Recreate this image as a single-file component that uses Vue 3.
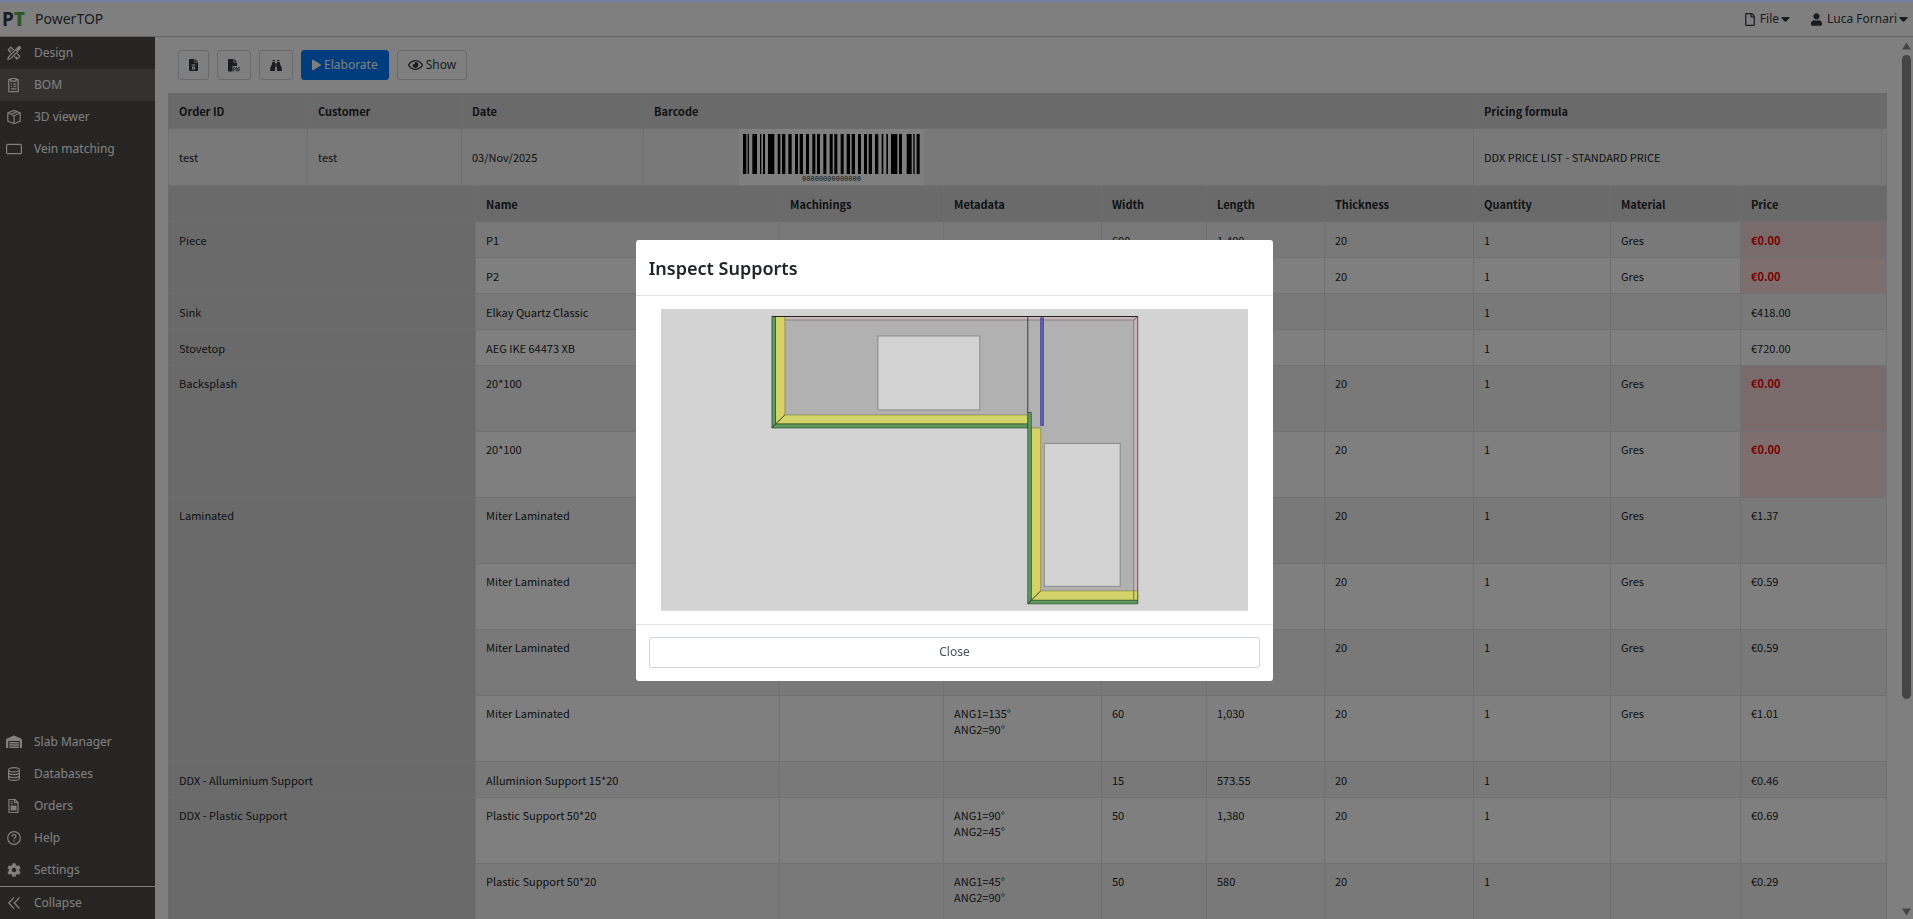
<script setup>
const topNav = [
  { label: 'Design', icon: 'design' },
  { label: 'BOM', icon: 'bom', active: true },
  { label: '3D viewer', icon: 'cube' },
  { label: 'Vein matching', icon: 'vein' },
]
const bottomNav = [
  { label: 'Slab Manager', icon: 'warehouse' },
  { label: 'Databases', icon: 'database' },
  { label: 'Orders', icon: 'orders' },
  { label: 'Help', icon: 'help' },
  { label: 'Settings', icon: 'settings' },
]

const share = (list) => {
  const total = list.reduce((a, b) => a + b, 0)
  return list.map((w) => ({ width: (100 * w) / total + '%' }))
}
const orderCols = share([139, 154, 182, 830, 408, 6])
const partCols = share([307, 304, 164, 158, 105, 118, 149, 137, 130, 147])

const headings = ['Name', 'Machinings', 'Metadata', 'Width', 'Length', 'Thickness', 'Quantity', 'Material', 'Price']

const groups = [
  {
    name: 'Piece',
    rows: [
      { name: 'P1', width: '600', length: '1,400', thick: '20', material: 'Gres', price: '€0.00', alert: true },
      { name: 'P2', width: '600', length: '1,600', thick: '20', material: 'Gres', price: '€0.00', alert: true },
    ],
  },
  { name: 'Sink', rows: [{ name: 'Elkay Quartz Classic', price: '€418.00' }] },
  { name: 'Stovetop', rows: [{ name: 'AEG IKE 64473 XB', price: '€720.00' }] },
  {
    name: 'Backsplash',
    rows: [
      { name: '20*100', tall: true, thick: '20', material: 'Gres', price: '€0.00', alert: true },
      { name: '20*100', tall: true, thick: '20', material: 'Gres', price: '€0.00', alert: true },
    ],
  },
  {
    name: 'Laminated',
    rows: [
      { name: 'Miter Laminated', tall: true, thick: '20', material: 'Gres', price: '€1.37' },
      { name: 'Miter Laminated', tall: true, thick: '20', material: 'Gres', price: '€0.59' },
      { name: 'Miter Laminated', tall: true, thick: '20', material: 'Gres', price: '€0.59' },
      { name: 'Miter Laminated', tall: true, meta: ['ANG1=135°', 'ANG2=90°'], width: '60', length: '1,030', thick: '20', material: 'Gres', price: '€1.01' },
    ],
  },
  {
    name: 'DDX - Alluminium Support',
    rows: [{ name: 'Alluminion Support 15*20', width: '15', length: '573.55', thick: '20', price: '€0.46' }],
  },
  {
    name: 'DDX - Plastic Support',
    rows: [
      { name: 'Plastic Support 50*20', tall: true, meta: ['ANG1=90°', 'ANG2=45°'], width: '50', length: '1,380', thick: '20', price: '€0.69' },
      { name: 'Plastic Support 50*20', tall: true, meta: ['ANG1=45°', 'ANG2=90°'], width: '50', length: '580', thick: '20', price: '€0.29' },
    ],
  },
]
const rows = groups.flatMap((g) =>
  g.rows.map((r, i) => ({ ...r, group: i === 0 ? g.name : null, span: g.rows.length }))
)

const bars = [
  [12, 10], [26, 4], [40, 14], [63, 4], [72, 6], [87, 19], [116, 8], [129, 10], [148, 10], [168, 9],
  [182, 10], [201, 9], [220, 9], [234, 9], [253, 9], [272, 9], [286, 9], [305, 9], [323, 10], [338, 10],
  [357, 9], [375, 9], [389, 10], [408, 10], [428, 5], [442, 5], [456, 19], [480, 9], [503, 15], [523, 4], [533, 9],
]
</script>

<template>
  <div class="app">
    <header class="topbar">
      <div class="brand">
        <span class="logo" aria-hidden="true">P<b>T</b></span>
        <span class="brand-name">PowerTOP</span>
      </div>
      <nav class="menus">
        <button type="button" class="menu">
          <svg class="file-icon" viewBox="0 0 384 512"><path d="M369.9 97.9L286 14C277 5 264.8 0 252.1 0H48C21.5 0 0 21.5 0 48v416c0 26.5 21.5 48 48 48h288c26.5 0 48-21.5 48-48V131.9c0-12.7-5.1-25-14.1-34zM332.1 128H256V51.9l76.1 76.1zM48 464V48h160v104c0 13.3 10.7 24 24 24h104v288H48z" /></svg>
          <span>File</span>
          <svg class="caret" viewBox="0 0 9 5"><path d="M1 0h7q1 0 .6 1L5.200 4.600q-.7.600-1.400 0L.4 1Q0 0 1 0z" /></svg>
        </button>
        <button type="button" class="menu">
          <svg class="user-icon" viewBox="0 0 448 512"><path d="M224 256c70.700 0 128-57.300 128-128S294.700 0 224 0 96 57.300 96 128s57.300 128 128 128zm89.600 32h-16.700c-22.200 10.200-46.900 16-72.900 16s-50.600-5.800-72.900-16h-16.700C60.200 288 0 348.200 0 422.400V464c0 26.500 21.500 48 48 48h352c26.500 0 48-21.500 48-48v-41.600c0-74.200-60.200-134.400-134.400-134.400z" /></svg>
          <span>Luca Fornari</span>
          <svg class="caret" viewBox="0 0 9 5"><path d="M1 0h7q1 0 .6 1L5.200 4.600q-.7.600-1.400 0L.4 1Q0 0 1 0z" /></svg>
        </button>
      </nav>
    </header>

    <div class="body">
      <aside class="sidebar">
        <nav v-for="(list, n) in [topNav, bottomNav]" :key="n" class="nav">
          <a v-for="item in list" :key="item.label" href="#" class="nav-item" :class="{ active: item.active }">
            <svg class="nav-icon" viewBox="0 0 16 16">
              <g v-if="item.icon === 'design'" class="line">
                <path d="M2 5 4.800 2.200 7.500 5M11 8.500l2.800 2.800-2.800 2.800-2.800-2.800M2 5l2.800 2.800M4.200 6.200l1.200-1.200M11.200 13l-1-1" />
                <path d="M9.800 4.500 2.500 11.800 1.900 14.300l2.500-.6 7.300-7.300z" />
                <path class="solid" d="m10.800 3.500 1.600-1.600q.9-.7 1.700.1t.1 1.700L12.600 5.300z" />
              </g>
              <g v-else-if="item.icon === 'bom'" class="line">
                <path d="M5 2.700H2.800v12h9.400v-12H10M5 1.500h5v2.700H5zM5 7.200h1M7.500 7.200h2.800M5 9.500h1M7.500 9.500h2.800M5 11.800h5.300" />
              </g>
              <g v-else-if="item.icon === 'cube'" class="line">
                <path d="M8 1.400 14.200 4v8L8 14.700 1.800 12V4zM1.800 4 8 6.700 14.200 4M8 6.700v8M5 5.300 11 2.700" />
              </g>
              <g v-else-if="item.icon === 'vein'" class="line">
                <rect x=".6" y="3.300" width="14.800" height="9.400" rx="1" />
              </g>
              <g v-else-if="item.icon === 'warehouse'">
                <path d="M0 6Q0 5 1 4.500L7.200 1.700q.8-.3 1.600 0L15 4.500q1 .5 1 1.500v8h-2.200V7H2.200v7H0zM3.200 8h9.600v1.400H3.200zM3.200 10.300h9.600v1.400H3.200zM3.200 12.600h9.600V14H3.200z" />
              </g>
              <g v-else-if="item.icon === 'database'" class="line">
                <ellipse cx="8" cy="3.700" rx="5.400" ry="2.100" />
                <path d="M2.600 3.700v8.600c0 2.800 10.800 2.800 10.800 0V3.700M2.600 6.600c0 2.700 10.800 2.700 10.800 0M2.600 9.500c0 2.700 10.800 2.700 10.800 0" />
              </g>
              <g v-else-if="item.icon === 'orders'" class="line">
                <path d="M3 1.500h6l3 3v10H3zM8.500 1.500v3.200H12M5 3.700h1.500M5 5.700h1.500" />
                <path class="solid" d="M5.200 8h4.700v4H5.200z" />
              </g>
              <g v-else-if="item.icon === 'help'" class="line">
                <circle cx="8" cy="8" r="6.300" />
                <path d="M6 6.400c.1-2.500 4-2.300 4-.1 0 1.500-2 1.500-2 2.900M8 10.300v1.400" />
              </g>
              <g v-else transform="translate(1 1) scale(.0275)">
                <path d="M487.400 315.700l-42.600-24.600c4.300-23.200 4.300-47 0-70.200l42.600-24.600c4.900-2.800 7.100-8.600 5.500-14-11.100-35.600-30-67.800-54.700-94.600-3.800-4.100-10-5.100-14.800-2.300L380.800 110c-17.900-15.400-38.500-27.300-60.800-35.100V25.800c0-5.600-3.900-10.500-9.400-11.700-36.700-8.200-74.300-7.800-109.200 0-5.500 1.200-9.400 6.100-9.400 11.700V75c-22.200 7.900-42.800 19.800-60.800 35.100L88.700 85.500c-4.900-2.800-11-1.900-14.800 2.300-24.700 26.700-43.600 58.900-54.700 94.600-1.700 5.400.6 11.200 5.500 14L67.300 221c-4.300 23.200-4.300 47 0 70.200l-42.600 24.600c-4.900 2.800-7.100 8.600-5.500 14 11.100 35.600 30 67.800 54.700 94.600 3.800 4.100 10 5.100 14.800 2.300l42.600-24.600c17.900 15.400 38.500 27.300 60.800 35.100v49.200c0 5.600 3.900 10.500 9.400 11.700 36.700 8.200 74.300 7.800 109.200 0 5.500-1.200 9.400-6.100 9.400-11.700v-49.200c22.200-7.900 42.800-19.800 60.800-35.100l42.600 24.600c4.900 2.800 11 1.900 14.800-2.300 24.700-26.700 43.600-58.900 54.700-94.600 1.500-5.500-.7-11.300-5.600-14.100zM256 336c-44.100 0-80-35.900-80-80s35.900-80 80-80 80 35.900 80 80-35.900 80-80 80z" />
              </g>
            </svg>
            <span>{{ item.label }}</span>
          </a>
        </nav>
        <button type="button" class="nav-item collapse">
          <svg class="nav-icon" viewBox="0 0 16 16"><path class="line" d="M8 2.500 2.700 8 8 13.500M13.500 2.500 8.200 8l5.300 5.500" /></svg>
          <span>Collapse</span>
        </button>
      </aside>

      <main class="main">
        <div class="content">
          <div class="toolbar">
            <button type="button" class="btn" aria-label="Export spreadsheet">
              <svg class="w9" viewBox="0 0 9 12"><path fill-rule="evenodd" d="M1 0h4.500v3.500H9V11q0 1-1 1H1q-1 0-1-1V1q0-1 1-1zM6.200 0 9 2.800H6.200zM2.500 5.500v1h4v-1zM3 7.500v3h3v-3zM4 8.500h1v1H4z" /></svg>
            </button>
            <button type="button" class="btn" aria-label="Export PDF">
              <svg class="w12" viewBox="0 0 12 13"><path d="M1 0h4.500v3.500H9V7H4.500v5.500H1q-1 0-1-1V1q0-1 1-1zM6.200 0 9 2.800H6.200z" /><path class="pdf" d="M5.500 12.500V8.500h1q1 0 1 1t-1 1h-1M8.200 8.500v3.500q1.500 0 1.500-1.700T8.200 8.500M10.700 12.500v-4H12M10.700 10.500h1" /></svg>
            </button>
            <button type="button" class="btn" aria-label="Search">
              <svg class="w12" viewBox="0 0 13 13"><path d="M2.800.5h2.500V2H2.800zM7.700.5h2.500V2H7.700zM2.600 2.700h2.900V12q0 .5-.5.5H.5Q0 12.500 0 12 0 8 2 5.500zM10.400 2.700H7.500V12q0 .5.5.5h4.500q.5 0 .5-.5 0-4-2-6.500zM5.800 4h1.400v4H5.800z" /></svg>
            </button>
            <button type="button" class="btn primary">
              <svg class="w9" viewBox="0 0 448 512"><path d="M424.400 214.700L72.400 6.600C43.800-10.300 0 6.100 0 47.900V464c0 37.500 40.700 60.100 72.400 41.300l352-208c31.400-18.500 31.500-64.100 0-82.600z" /></svg>
              <span>Elaborate</span>
            </button>
            <button type="button" class="btn">
              <svg class="w15" viewBox="0 0 576 512"><path d="M288 144a110.940 110.940 0 0 0-31.240 5 55.400 55.400 0 0 1 7.240 27 56 56 0 0 1-56 56 55.400 55.400 0 0 1-27-7.240A111.710 111.710 0 1 0 288 144zm284.520 97.400C518.290 135.590 410.930 64 288 64S57.680 135.640 3.480 241.410a32.350 32.350 0 0 0 0 29.190C57.710 376.410 165.070 448 288 448s230.320-71.640 284.520-177.410a32.350 32.350 0 0 0 0-29.190zM288 400c-98.650 0-189.090-55-237.930-144C98.910 167 189.340 112 288 112s189.090 55 237.930 144C477.100 345 386.660 400 288 400z" /></svg>
              <span>Show</span>
            </button>
          </div>

          <table class="grid">
            <colgroup><col v-for="(c, i) in orderCols" :key="i" :style="c" /></colgroup>
            <thead>
              <tr>
                <th>Order ID</th><th>Customer</th><th>Date</th><th>Barcode</th><th>Pricing formula</th><th></th>
              </tr>
            </thead>
            <tbody>
              <tr class="order striped">
                <td>test</td>
                <td>test</td>
                <td>03/Nov/2025</td>
                <td class="barcode-cell">
                  <div class="barcode">
                    <svg viewBox="0 0 555 118" preserveAspectRatio="none">
                      <rect v-for="b in bars" :key="b[0]" :x="b[0]" y="0" :width="b[1]" height="118" />
                    </svg>
                    <span>00000000000000</span>
                  </div>
                </td>
                <td>DDX PRICE LIST - STANDARD PRICE</td>
                <td></td>
              </tr>
            </tbody>
          </table>

          <table class="grid">
            <colgroup><col v-for="(c, i) in partCols" :key="i" :style="c" /></colgroup>
            <thead>
              <tr><th></th><th v-for="h in headings" :key="h">{{ h }}</th></tr>
            </thead>
            <tbody>
              <tr v-for="(r, i) in rows" :key="i" :class="{ tall: r.tall, striped: i % 2 === 0 }">
                <td v-if="r.group" class="group" :rowspan="r.span">{{ r.group }}</td>
                <td>{{ r.name }}</td>
                <td></td>
                <td><div v-for="m in r.meta" :key="m">{{ m }}</div></td>
                <td>{{ r.width }}</td>
                <td>{{ r.length }}</td>
                <td>{{ r.thick }}</td>
                <td>1</td>
                <td>{{ r.material }}</td>
                <td :class="{ alert: r.alert }">{{ r.price }}</td>
              </tr>
            </tbody>
          </table>
        </div>
        <div class="scrollbar" aria-hidden="true">
          <svg viewBox="0 0 10 8"><path d="M5 0 10 8H0z" /></svg>
          <div class="track"><div class="thumb"></div></div>
          <svg viewBox="0 0 10 8"><path d="M5 8 10 0H0z" /></svg>
        </div>
      </main>
    </div>

    <div class="backdrop">
      <section class="modal" role="dialog" aria-labelledby="modal-title">
        <h2 id="modal-title">Inspect Supports</h2>
        <div class="modal-body">
          <svg class="plan" viewBox="0 0 588 302" role="img" aria-label="Countertop supports plan">
            <rect width="588" height="302" fill="#d3d3d3" />
            <path d="M111 7.500H477V295H367V119H111z" fill="#b1b1b1" />
            <path d="M124 7.500H477V282H473V11H124z" fill="#c8b6ba" />
            <g fill="#d2d369" stroke="#77783c" stroke-width=".6">
              <path d="M114.500 7.500H124V106L114.500 115z" />
              <path d="M124 106H367V115H114.500z" />
              <path d="M370.500 119H380V282L370.500 291.500z" />
              <path d="M380 282H477V291.500H370.500z" />
            </g>
            <g fill="#629a62" stroke="#1c4a20" stroke-width=".7">
              <path d="M111 7.500h3.500V115L111 119z" />
              <path d="M114.500 115H367v4H111z" />
              <path d="M367 103.500h3.500v188L367 295z" />
              <path d="M370.500 291.500H477v3.500H367z" />
            </g>
            <g fill="none" stroke="#222" stroke-width=".8">
              <path d="M111 7.500H477" stroke-width="1.100" />
              <path d="M477 7.500V282" stroke="#5c4a4e" stroke-width=".9" />
              <path d="M124 11H473V282" stroke="#75666a" stroke-width=".7" />
              <path d="M477 282v13M473 282v9" stroke="#6b5a20" />
              <path d="M367 7.500V104" />
              <path d="M473 11l4-3.500M111 119l13-13M367 295l13-13" stroke="#4a4a20" />
            </g>
            <g fill="#d3d3d3" stroke="#8a8a8a">
              <rect x="217" y="27" width="102" height="74" />
              <rect x="383.500" y="134.500" width="76" height="143" />
            </g>
            <rect x="380" y="9" width="2.500" height="107.500" fill="#6a68b8" stroke="#3c3a94" stroke-width=".9" />
          </svg>
        </div>
        <div class="modal-footer">
          <button type="button" class="btn close">Close</button>
        </div>
      </section>
    </div>
  </div>
</template>

<style>
body {
  margin: 0;
  overflow: hidden;
}
</style>

<style scoped>
.app {
  height: 100vh;
  display: flex;
  flex-direction: column;
  background: #fff;
  color: #343a40;
  font-family: "Noto Sans", "Open Sans", sans-serif;
  font-size: 12px;
  line-height: 16px;
  overflow: hidden;
}
.app *, .app *::before {
  box-sizing: border-box;
}
button {
  font: inherit;
  color: inherit;
  background: none;
  border: 0;
  padding: 0;
  margin: 0;
}
svg {
  display: block;
  fill: currentColor;
  flex: none;
}
.topbar {
  height: 37px;
  flex: none;
  display: flex;
  align-items: center;
  justify-content: space-between;
  border-bottom: 1px solid #c8c8c8;
  padding: 2px 5px 0 2px;
}
.brand {
  display: flex;
  align-items: center;
  gap: 10px;
}
.logo {
  font-size: 19px;
  line-height: 24px;
  font-weight: 700;
}
.logo b {
  color: #5cae46;
}
.brand-name {
  font-size: 14px;
}
.menus {
  display: flex;
  gap: 21px;
}
.menu {
  display: flex;
  align-items: center;
}
.file-icon, .user-icon {
  width: 10px;
  height: 13px;
  margin-right: 5px;
}
.user-icon {
  width: 11px;
}
.caret {
  width: 9px;
  height: 5px;
  margin-left: 2px;
}
.body {
  flex: 1;
  min-height: 0;
  display: flex;
}
.sidebar {
  width: 155px;
  flex: none;
  display: flex;
  flex-direction: column;
  background: #4c4a47;
  color: #fff;
}
.nav:nth-child(2) {
  margin-top: auto;
}
.nav-item {
  height: 32px;
  width: 100%;
  display: flex;
  align-items: center;
  gap: 12px;
  padding-left: 6px;
  color: #fff;
  text-decoration: none;
}
.nav-item.active {
  background: #666461;
}
.nav-icon {
  width: 16px;
  height: 16px;
}
.line {
  fill: none;
  stroke: currentColor;
  stroke-width: 1.2;
}
.solid {
  fill: currentColor;
}
.collapse {
  height: 33px;
  border-top: 1px solid #fff;
}
.main {
  flex: 1;
  min-width: 0;
  display: flex;
}
.content {
  flex: 1;
  min-width: 0;
  padding: 13px 15px 0 13px;
  overflow: hidden;
}
.toolbar {
  display: flex;
  gap: 8px;
  padding: 0 10px 13px;
}
.btn {
  height: 30px;
  display: flex;
  align-items: center;
  justify-content: center;
  gap: 3px;
  padding: 0 10px;
  border: 1px solid #ced4da;
  border-radius: 3px;
}
.btn.primary {
  background: #007bff;
  border-color: #007bff;
  color: #fff;
}
.w9 {
  width: 9px;
  height: 12px;
}
.w12 {
  width: 12px;
  height: 13px;
}
.w15 {
  width: 15px;
  height: 14px;
}
.pdf {
  fill: none;
  stroke: currentColor;
  stroke-width: .8;
}
.grid {
  width: 100%;
  table-layout: fixed;
  border-collapse: separate;
  border-spacing: 0;
  color: #212529;
  font-family: "Noto Sans CJK SC", "Noto Sans", sans-serif;
  font-size: 11px;
  line-height: 16px;
}
.grid th, .grid td {
  height: 36px;
  padding: 10px 10px 9px;
  text-align: left;
  vertical-align: top;
  border-left: 1px solid #dee2e6;
  border-bottom: 1px solid #dee2e6;
}
.grid th, .grid .group {
  background: #d5d5d5;
  border-color: #dadada;
}
.grid th {
  font-weight: 700;
}
.grid .striped td:not(.group) {
  background: #f2f2f2;
}
.grid .tall td {
  height: 66px;
  padding-top: 9px;
}
.grid .order td {
  height: 57px;
  padding-top: 0;
  padding-bottom: 0;
  vertical-align: middle;
}
.grid tr td:last-child {
  border-right: 1px solid #dee2e6;
}
.grid td.alert {
  background: #ffdcdc;
  color: #f00000;
  font-weight: 700;
}
.grid .striped td.alert:not(.group) {
  background: #f3d7d7;
}
.barcode {
  width: 185px;
  height: 56px;
  margin-left: 85px;
  padding-top: 5px;
  background: #fff;
}
.barcode svg {
  width: 100%;
  height: 40px;
  fill: #000;
}
.barcode span {
  display: block;
  text-align: center;
  font: 7px/10px "Liberation Mono", monospace;
}
.scrollbar {
  width: 11px;
  flex: none;
  display: flex;
  flex-direction: column;
  align-items: center;
  padding: 5px 2px 3px 0;
  color: #8a8a8a;
}
.scrollbar svg {
  width: 9px;
  height: 8px;
}
.track {
  flex: 1;
  padding: 5px 0;
}
.thumb {
  width: 9px;
  height: 76%;
  border-radius: 5px;
  background: #8a8a8a;
}
.backdrop {
  position: fixed;
  inset: 0;
  display: flex;
  align-items: center;
  justify-content: center;
  padding-right: 4px;
  border-top: 2px solid #7480a4;
  background: rgba(0, 0, 0, .5);
}
.modal {
  width: calc(100vw / 3);
  background: #fff;
  border-radius: 3px;
  color: #212529;
}
.modal h2 {
  margin: 0;
  padding: 16px 13px 15px;
  font-size: 18px;
  line-height: 24px;
  font-weight: 600;
  border-bottom: 1px solid #dee2e6;
}
.modal-body {
  padding: 13px 25px;
}
.plan {
  width: 100%;
}
.modal-footer {
  padding: 12px 13px 13px;
  border-top: 1px solid #dee2e6;
}
.close {
  width: 100%;
  height: 31px;
  color: #495057;
}
</style>
